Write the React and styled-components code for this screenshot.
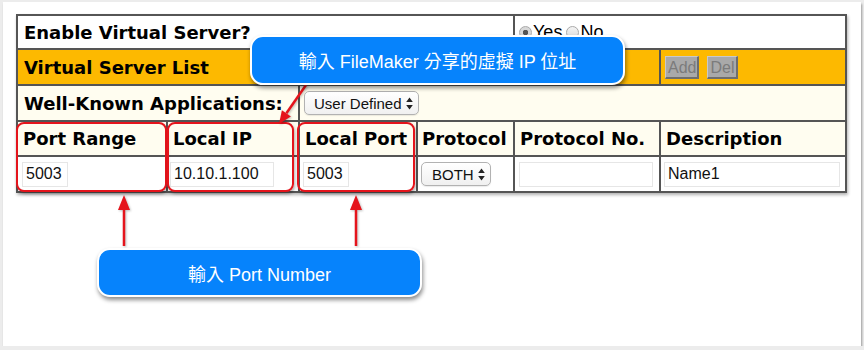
import React from "react";
import styled, { createGlobalStyle } from "styled-components";

const GlobalStyle = createGlobalStyle`
  html, body {
    margin: 0;
    padding: 0;
    background: #ececec;
  }
  body {
    font-family: "Liberation Sans", Arial, sans-serif;
  }
`;

const Frame = styled.div`
  position: relative;
  width: 858px;
  height: 344px;
  margin: 2px 0 0 3px;
  padding: 12px 0 0 13px;
  box-sizing: border-box;
  background: #fff;
  box-shadow: 1px 2px 2px rgba(0, 0, 0, 0.35);
`;

const Table = styled.table`
  table-layout: fixed;
  width: 831px;
  border-collapse: separate;
  border-spacing: 0;
  border-top: 2px solid #555;
  border-left: 2px solid #555;
  box-shadow: 1px 2px 3px rgba(0, 0, 0, 0.3);
  font-family: "DejaVu Sans", Verdana, sans-serif;
`;

const Cell = styled.td`
  box-sizing: border-box;
  height: ${(p) => p.$h}px;
  padding: 0 ${(p) => (p.$pad != null ? p.$pad : 5)}px;
  border-right: 2px solid #555;
  border-bottom: 2px solid #555;
  background: ${(p) => p.$bg || "#fff"};
  color: #000;
  font-size: 18px;
  font-weight: bold;
  white-space: nowrap;
  vertical-align: middle;
`;

const Inline = styled.div`
  display: flex;
  align-items: center;
  gap: ${(p) => p.$gap || 0}px;
  font-family: "Liberation Sans", Arial, sans-serif;
  font-weight: normal;
  font-size: 16px;
`;

const Radio = styled.span`
  display: inline-block;
  box-sizing: border-box;
  width: 13px;
  height: 13px;
  border-radius: 50%;
  border: 1px solid #a9a9a9;
  background: ${(p) =>
    p.$on
      ? "radial-gradient(circle, #555 0 2.5px, #d8d8d8 3px)"
      : "linear-gradient(#f4f4f4, #dcdcdc)"};
  margin-right: 1px;
`;

const RadioLabel = styled.span`
  color: #000;
  font-size: 18px;
  margin-right: 4px;
`;

const Btn = styled.span`
  display: inline-block;
  height: 23px;
  line-height: 22px;
  padding: 0 1px 0 2px;
  box-sizing: border-box;
  background: #a9a9a9;
  color: #7b7b7b;
  font-size: 16px;
  border-top: 1px solid #c9c9c9;
  border-left: 1px solid #c9c9c9;
  border-right: 2px solid #6e6e6e;
  border-bottom: 2px solid #6e6e6e;
`;

const FakeSelect = styled.span`
  display: inline-flex;
  align-items: center;
  gap: 4px;
  box-sizing: border-box;
  height: 24px;
  padding: 0 5px 0 ${(p) => p.$pl || 9}px;
  border: 1px solid #b2b2b2;
  border-radius: 5px;
  background: linear-gradient(#ffffff, #f0f0f0);
  box-shadow: 0 1px 1px rgba(0, 0, 0, 0.08);
  font-family: "Liberation Sans", Arial, sans-serif;
  font-weight: normal;
  font-size: 15px;
  color: #111;
`;

const Field = styled.input`
  display: block;
  box-sizing: border-box;
  width: ${(p) => p.$w}px;
  height: 25px;
  margin: 0;
  padding: 0 3px;
  border: 1px solid #e6e6e6;
  background: #fff;
  outline: none;
  font-family: "Liberation Sans", Arial, sans-serif;
  font-size: 16px;
  color: #111;
`;

const Highlight = styled.div`
  position: absolute;
  left: ${(p) => p.$x}px;
  top: 120px;
  width: ${(p) => p.$w}px;
  height: 70px;
  box-sizing: border-box;
  border: 2px solid #e5141c;
  border-radius: 8px;
  box-shadow: 1px 2px 3px rgba(0, 0, 0, 0.3);
`;

const Bubble = styled.div`
  position: absolute;
  left: ${(p) => p.$x}px;
  top: ${(p) => p.$y}px;
  width: ${(p) => p.$w}px;
  height: ${(p) => p.$h}px;
  box-sizing: border-box;
  display: flex;
  align-items: center;
  justify-content: center;
  border: 2px solid #fff;
  border-radius: 13px;
  background: #0683fc;
  box-shadow: 1px 3px 4px rgba(0, 0, 0, 0.45);
  color: #fff;
  font-family: "Liberation Sans", "Noto Sans CJK TC", sans-serif;
  font-size: 18px;
  white-space: nowrap;
`;

const Arrows = styled.svg`
  position: absolute;
  left: 0;
  top: 0;
  width: 858px;
  height: 344px;
  pointer-events: none;
  filter: drop-shadow(1px 1px 1px rgba(0, 0, 0, 0.25));
`;

function UpDown() {
  return (
    <svg width="7" height="13" viewBox="0 0 7 13">
      <path d="M3.5 0.5 L6.8 5 H0.2 Z M3.5 12.5 L6.8 8 H0.2 Z" fill="#222" />
    </svg>
  );
}

const RED = "#e5141c";

function UpArrow({ x }) {
  return (
    <g>
      <line x1={x} y1={244} x2={x} y2={206} stroke={RED} strokeWidth="2.5" />
      <polygon points={`${x},193 ${x - 6},208 ${x + 6},208`} fill={RED} />
    </g>
  );
}

export default function App() {
  return (
    <>
      <GlobalStyle />
      <Frame>
        <Table>
          <colgroup>
            <col style={{ width: 150 }} />
            <col style={{ width: 132 }} />
            <col style={{ width: 118 }} />
            <col style={{ width: 97 }} />
            <col style={{ width: 146 }} />
            <col style={{ width: 186 }} />
          </colgroup>
          <tbody>
            <tr>
              <Cell colSpan={4} $h={34} $pad={6}>Enable Virtual Server?</Cell>
              <Cell colSpan={2} $h={34} $pad={4}>
                <Inline>
                  <Radio $on />
                  <RadioLabel>Yes</RadioLabel>
                  <Radio />
                  <RadioLabel>No</RadioLabel>
                </Inline>
              </Cell>
            </tr>
            <tr>
              <Cell colSpan={4} $h={36} $pad={6} $bg="#fdb900">Virtual Server List</Cell>
              <Cell $h={36} $bg="#fdb900" />
              <Cell $h={36} $bg="#fdb900" $pad={4}>
                <Inline $gap={8}>
                  <Btn>Add</Btn>
                  <Btn>Del</Btn>
                </Inline>
              </Cell>
            </tr>
            <tr>
              <Cell colSpan={2} $h={36} $pad={6} $bg="#fffdf0">Well-Known Applications:</Cell>
              <Cell colSpan={4} $h={36} $pad={4} $bg="#fffdf0">
                <FakeSelect>
                  User Defined
                  <UpDown />
                </FakeSelect>
              </Cell>
            </tr>
            <tr>
              <Cell $h={35} $bg="#fffdf0">Port Range</Cell>
              <Cell $h={35} $bg="#fffdf0">Local IP</Cell>
              <Cell $h={35} $bg="#fffdf0">Local Port</Cell>
              <Cell $h={35} $bg="#fffdf0" $pad={4}>Protocol</Cell>
              <Cell $h={35} $bg="#fffdf0">Protocol No.</Cell>
              <Cell $h={35} $bg="#fffdf0">Description</Cell>
            </tr>
            <tr>
              <Cell $h={36} $pad={4}>
                <Field $w={46} defaultValue="5003" readOnly />
              </Cell>
              <Cell $h={36} $pad={2}>
                <Field $w={104} defaultValue="10.10.1.100" readOnly />
              </Cell>
              <Cell $h={36} $pad={3}>
                <Field $w={46} defaultValue="5003" readOnly />
              </Cell>
              <Cell $h={36} $pad={3}>
                <FakeSelect $pl={10}>
                  BOTH
                  <UpDown />
                </FakeSelect>
              </Cell>
              <Cell $h={36} $pad={4}>
                <Field $w={134} defaultValue="" readOnly />
              </Cell>
              <Cell $h={36} $pad={3}>
                <Field $w={176} defaultValue="Name1" readOnly />
              </Cell>
            </tr>
          </tbody>
        </Table>

        <Highlight $x={13} $w={151} />
        <Highlight $x={164} $w={127} />
        <Highlight $x={294} $w={118} />

        <Arrows viewBox="0 0 858 344">
          <line x1="303" y1="83" x2="283.4" y2="111.3" stroke={RED} strokeWidth="2.5" />
          <polygon points="276,122 287.9,114.4 278.9,108.2" fill={RED} />
          <UpArrow x={121} />
          <UpArrow x={353} />
        </Arrows>

        <Bubble $x={247} $y={33} $w={375} $h={50}>
          輸入 FileMaker 分享的虛擬 IP 位址
        </Bubble>
        <Bubble $x={94} $y={246} $w={325} $h={49}>
          輸入 Port Number
        </Bubble>
      </Frame>
    </>
  );
}
